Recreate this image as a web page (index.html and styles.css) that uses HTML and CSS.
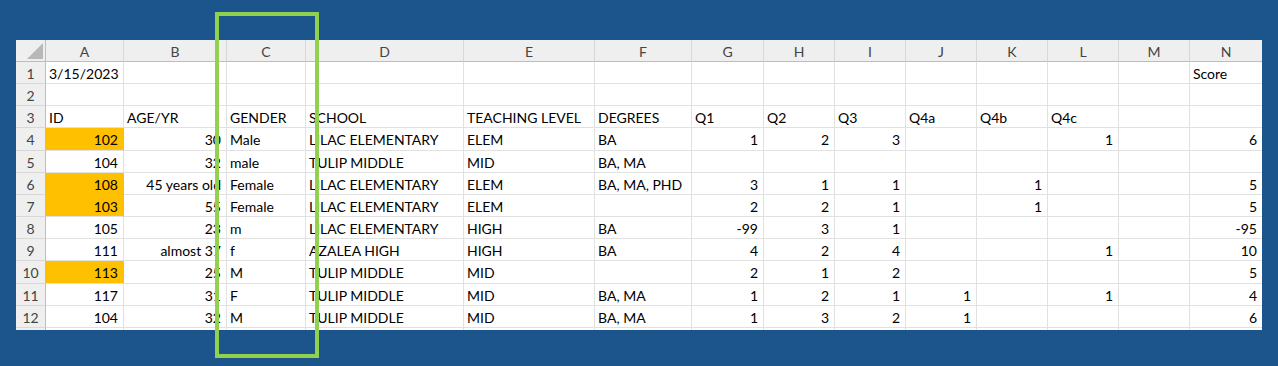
FILE: index.html
```html
<!DOCTYPE html>
<html>
<head>
<meta charset="utf-8">
<link rel="stylesheet" href="styles.css">
</head>
<body>
<div class="stage">
  <div class="sheet">
    <div class="corner hdr"><svg class="tri" width="16" height="16" viewBox="0 0 16 16"><polygon points="16,0 16,16 0,16" fill="#b8b8b8"/></svg></div>
    <div class="hdr col">A</div><div class="hdr col">B</div><div class="hdr col">C</div><div class="hdr col">D</div><div class="hdr col">E</div><div class="hdr col">F</div><div class="hdr col">G</div><div class="hdr col">H</div><div class="hdr col">I</div><div class="hdr col">J</div><div class="hdr col">K</div><div class="hdr col">L</div><div class="hdr col">M</div><div class="hdr col last">N</div>

    <div class="hdr rn">1</div><div class="c">3/15/2023</div><div class="c"></div><div class="c"></div><div class="c"></div><div class="c"></div><div class="c"></div><div class="c"></div><div class="c"></div><div class="c"></div><div class="c"></div><div class="c"></div><div class="c"></div><div class="c"></div><div class="c last">Score</div>

    <div class="hdr rn">2</div><div class="c"></div><div class="c"></div><div class="c"></div><div class="c"></div><div class="c"></div><div class="c"></div><div class="c"></div><div class="c"></div><div class="c"></div><div class="c"></div><div class="c"></div><div class="c"></div><div class="c"></div><div class="c last"></div>

    <div class="hdr rn">3</div><div class="c">ID</div><div class="c">AGE/YR</div><div class="c">GENDER</div><div class="c">SCHOOL</div><div class="c">TEACHING LEVEL</div><div class="c">DEGREES</div><div class="c">Q1</div><div class="c">Q2</div><div class="c">Q3</div><div class="c">Q4a</div><div class="c">Q4b</div><div class="c">Q4c</div><div class="c"></div><div class="c last"></div>

    <div class="hdr rn">4</div><div class="c r hl">102</div><div class="c r">30</div><div class="c">Male</div><div class="c">LILAC ELEMENTARY</div><div class="c">ELEM</div><div class="c">BA</div><div class="c r">1</div><div class="c r">2</div><div class="c r">3</div><div class="c"></div><div class="c"></div><div class="c r">1</div><div class="c"></div><div class="c r last">6</div>

    <div class="hdr rn">5</div><div class="c r">104</div><div class="c r">32</div><div class="c">male</div><div class="c">TULIP MIDDLE</div><div class="c">MID</div><div class="c">BA, MA</div><div class="c"></div><div class="c"></div><div class="c"></div><div class="c"></div><div class="c"></div><div class="c"></div><div class="c"></div><div class="c last"></div>

    <div class="hdr rn">6</div><div class="c r hl hlb">108</div><div class="c r">45 years old</div><div class="c">Female</div><div class="c">LILAC ELEMENTARY</div><div class="c">ELEM</div><div class="c">BA, MA, PHD</div><div class="c r">3</div><div class="c r">1</div><div class="c r">1</div><div class="c"></div><div class="c r">1</div><div class="c"></div><div class="c"></div><div class="c r last">5</div>

    <div class="hdr rn">7</div><div class="c r hl">103</div><div class="c r">55</div><div class="c">Female</div><div class="c">LILAC ELEMENTARY</div><div class="c">ELEM</div><div class="c"></div><div class="c r">2</div><div class="c r">2</div><div class="c r">1</div><div class="c"></div><div class="c r">1</div><div class="c"></div><div class="c"></div><div class="c r last">5</div>

    <div class="hdr rn">8</div><div class="c r">105</div><div class="c r">23</div><div class="c">m</div><div class="c">LILAC ELEMENTARY</div><div class="c">HIGH</div><div class="c">BA</div><div class="c r">-99</div><div class="c r">3</div><div class="c r">1</div><div class="c"></div><div class="c"></div><div class="c"></div><div class="c"></div><div class="c r last">-95</div>

    <div class="hdr rn">9</div><div class="c r">111</div><div class="c r">almost 37</div><div class="c">f</div><div class="c">AZALEA HIGH</div><div class="c">HIGH</div><div class="c">BA</div><div class="c r">4</div><div class="c r">2</div><div class="c r">4</div><div class="c"></div><div class="c"></div><div class="c r">1</div><div class="c"></div><div class="c r last">10</div>

    <div class="hdr rn">10</div><div class="c r hl">113</div><div class="c r">25</div><div class="c">M</div><div class="c">TULIP MIDDLE</div><div class="c">MID</div><div class="c"></div><div class="c r">2</div><div class="c r">1</div><div class="c r">2</div><div class="c"></div><div class="c"></div><div class="c"></div><div class="c"></div><div class="c r last">5</div>

    <div class="hdr rn">11</div><div class="c r">117</div><div class="c r">31</div><div class="c">F</div><div class="c">TULIP MIDDLE</div><div class="c">MID</div><div class="c">BA, MA</div><div class="c r">1</div><div class="c r">2</div><div class="c r">1</div><div class="c r">1</div><div class="c"></div><div class="c r">1</div><div class="c"></div><div class="c r last">4</div>

    <div class="hdr rn">12</div><div class="c r">104</div><div class="c r">32</div><div class="c">M</div><div class="c">TULIP MIDDLE</div><div class="c">MID</div><div class="c">BA, MA</div><div class="c r">1</div><div class="c r">3</div><div class="c r">2</div><div class="c r">1</div><div class="c"></div><div class="c"></div><div class="c"></div><div class="c r last">6</div>

    <div class="hdr rn stub"></div><div class="c stub"></div><div class="c stub"></div><div class="c stub"></div><div class="c stub"></div><div class="c stub"></div><div class="c stub"></div><div class="c stub"></div><div class="c stub"></div><div class="c stub"></div><div class="c stub"></div><div class="c stub"></div><div class="c stub"></div><div class="c stub"></div><div class="c stub last"></div>
  </div>
  <div class="focus"></div>
</div>
</body>
</html>
```

FILE: styles.css
```css
* { box-sizing: border-box; }
html, body { margin: 0; padding: 0; }
body {
  background: #1c558c;
  width: 1278px;
  height: 366px;
  overflow: hidden;
  font-family: Lato, "Liberation Sans", sans-serif;
}
.stage {
  position: relative;
  padding: 40px 16px 0 16px;
}
.sheet {
  display: grid;
  grid-template-columns: 30px 78px 103px 79px 158px 131px 97px 72px 71px 71px 71px 71px 71px 71px 72px;
  grid-template-rows: 22px repeat(12, 22.17px) 2px;
  width: 1246px;
  height: 290px;
  background: #fff;
  overflow: hidden;
}
.c, .hdr {
  border-right: 1px solid #e1e1e1;
  border-bottom: 1px solid #e1e1e1;
  white-space: nowrap;
  font-size: 14px;
  line-height: 21px;
  padding: 1px 3px 0 3px;
  color: #000;
}
.c.last { border-right: none; }
.c.r { text-align: right; padding-right: 5px; }
.c.hl { background: #ffc000; border-right-color: #ffc000; }
.c.hlb { border-bottom-color: #ffc000; }
.hdr {
  background: #efefef;
  color: #444;
  text-align: center;
  padding: 1px 0 0 0;
}
.hdr.col {
  border-right-color: #d8d8d8;
  border-bottom: 1px solid #bdbdbd;
}
.hdr.col.last { border-right: none; }
.hdr.rn {
  border-right: 1px solid #bdbdbd;
  border-bottom-color: #d8d8d8;
}
.corner {
  position: relative;
  border-right: 1px solid #bdbdbd;
  border-bottom: 1px solid #bdbdbd;
}
.tri {
  position: absolute;
  right: 2px;
  bottom: 2px;
}
.stub { border-bottom: none; padding: 0; }
.focus {
  position: absolute;
  left: 215px;
  top: 12px;
  width: 104px;
  height: 346px;
  border: 4px solid #92d050;
}
```
